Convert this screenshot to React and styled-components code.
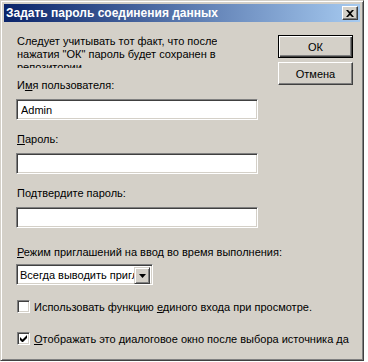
import React from 'react'
import styled, { createGlobalStyle } from 'styled-components'

const GlobalStyle = createGlobalStyle`
  html, body {
    margin: 0;
    padding: 0;
    background: #ffffff;
  }
  body {
    font-family: "Liberation Sans", Arial, sans-serif;
    font-size: 11px;
    color: #000000;
  }
`

const Window = styled.div`
  box-sizing: border-box;
  width: 364px;
  height: 361px;
  padding: 3px;
  background: #d4d0c8;
  border: 1px solid;
  border-color: #d4d0c8 #404040 #404040 #d4d0c8;
  box-shadow: inset 1px 1px #ffffff, inset -1px -1px #808080;
  display: flex;
  flex-direction: column;
  overflow: hidden;
`

const TitleBar = styled.div`
  height: 18px;
  flex: none;
  display: flex;
  align-items: center;
  justify-content: space-between;
  padding: 0 2px 0 2px;
  background: linear-gradient(to right, #0a246a, #a6caf0);
  color: #ffffff;
  font-weight: bold;
  font-size: 12px;
  white-space: nowrap;
`

const CloseButton = styled.div`
  box-sizing: border-box;
  width: 16px;
  height: 14px;
  display: flex;
  align-items: center;
  justify-content: center;
  background: #d4d0c8;
  border: 1px solid;
  border-color: #ffffff #404040 #404040 #ffffff;
  box-shadow: inset -1px -1px #808080;
`

const Body = styled.div`
  display: grid;
  grid-template-columns: 1fr 75px;
  column-gap: 16px;
  padding: 13px 7px 0 12px;
`

const Form = styled.div`
  display: flex;
  flex-direction: column;
  align-items: flex-start;
  min-width: 0;
`

const Note = styled.div`
  height: 33px;
  padding-left: 1px;
  line-height: 13px;
  overflow: hidden;
`

const Label = styled.div`
  margin-top: ${p => p.$gap}px;
  padding-left: 1px;
  line-height: 13px;
  white-space: nowrap;
`

const Key = styled.span`
  text-decoration: underline;
`

const sunken = `
  box-sizing: border-box;
  border: 1px solid;
  border-color: #808080 #ffffff #ffffff #808080;
  box-shadow: inset 1px 1px #404040, inset -1px -1px #d4d0c8;
`

const TextBox = styled.input`
  ${sunken}
  display: block;
  width: 242px;
  height: 21px;
  margin: 7px 0 0 0;
  padding: 0 0 0 4px;
  background: #ffffff;
  font: inherit;
  color: #000000;
  outline: none;
`

const Combo = styled.div`
  ${sunken}
  width: 137px;
  height: 21px;
  margin-top: 5px;
  padding: 2px;
  display: flex;
  background: #ffffff;
`

const ComboText = styled.div`
  flex: 1;
  min-width: 0;
  padding-left: 1px;
  line-height: 17px;
  white-space: nowrap;
  overflow: hidden;
`

const ComboArrow = styled.div`
  box-sizing: border-box;
  flex: none;
  width: 16px;
  height: 17px;
  display: flex;
  align-items: center;
  justify-content: center;
  background: #d4d0c8;
  border: 1px solid;
  border-color: #d4d0c8 #404040 #404040 #d4d0c8;
  box-shadow: inset 1px 1px #ffffff, inset -1px -1px #808080;
`

const CheckRow = styled.div`
  margin-top: ${p => p.$gap}px;
  padding-left: 1px;
  width: 338px;
  display: flex;
  align-items: center;
  gap: 4px;
  white-space: nowrap;
  overflow: hidden;
`

const Box = styled.div`
  ${sunken}
  flex: none;
  width: 13px;
  height: 13px;
  display: flex;
  align-items: center;
  justify-content: center;
  background: #ffffff;
`

const Buttons = styled.div`
  display: flex;
  flex-direction: column;
  gap: 4px;
`

const Button = styled.div`
  box-sizing: border-box;
  width: 75px;
  height: 23px;
  display: flex;
  align-items: center;
  justify-content: center;
  background: #d4d0c8;
  border: 1px solid;
  border-color: ${p => (p.$default ? '#000000' : '#ffffff #404040 #404040 #ffffff')};
  box-shadow: ${p => (p.$default
    ? 'inset 1px 1px #ffffff, inset -1px -1px #404040, inset -2px -2px #808080'
    : 'inset -1px -1px #808080')};
`

const Checkbox = ({ checked, children, gap }) => (
  <CheckRow $gap={gap}>
    <Box>
      {checked && (
        <svg width="7" height="7" viewBox="0 0 7 7">
          <path d="M0 2v3l2 2h1l4-4V0L2.5 4.5z" fill="#000" />
        </svg>
      )}
    </Box>
    <span>{children}</span>
  </CheckRow>
)

const App = () => (
  <>
    <GlobalStyle />
    <Window>
      <TitleBar>
        <span>Задать пароль соединения данных</span>
        <CloseButton>
          <svg width="8" height="7" viewBox="0 0 8 7">
            <path d="M0 0h2l2 2 2-2h2L5 3.5 8 7H6L4 5 2 7H0l3-3.5z" fill="#000" />
          </svg>
        </CloseButton>
      </TitleBar>
      <Body>
        <Form>
          <Note>
            Следует учитывать тот факт, что после<br />
            нажатия "ОК" пароль будет сохранен в<br />
            репозитории
          </Note>
          <Label $gap={11}>И<Key>м</Key>я пользователя:</Label>
          <TextBox defaultValue="Admin" />
          <Label $gap={13}><Key>П</Key>ароль:</Label>
          <TextBox type="text" />
          <Label $gap={13}>По<Key>д</Key>твердите пароль:</Label>
          <TextBox type="text" />
          <Label $gap={18}><Key>Р</Key>ежим приглашений на ввод во время выполнения:</Label>
          <Combo>
            <ComboText>Всегда выводить приглашения</ComboText>
            <ComboArrow>
              <svg width="7" height="4" viewBox="0 0 7 4">
                <path d="M0 0h7L3.5 4z" fill="#000" />
              </svg>
            </ComboArrow>
          </Combo>
          <Checkbox gap={15}>
            Использовать функцию <Key>е</Key>диного входа при просмотре.
          </Checkbox>
          <Checkbox gap={19} checked>
            <Key>О</Key>тображать это диалоговое окно после выбора источника да
          </Checkbox>
        </Form>
        <Buttons>
          <Button $default>ОК</Button>
          <Button>Отмена</Button>
        </Buttons>
      </Body>
    </Window>
  </>
)

export default App
